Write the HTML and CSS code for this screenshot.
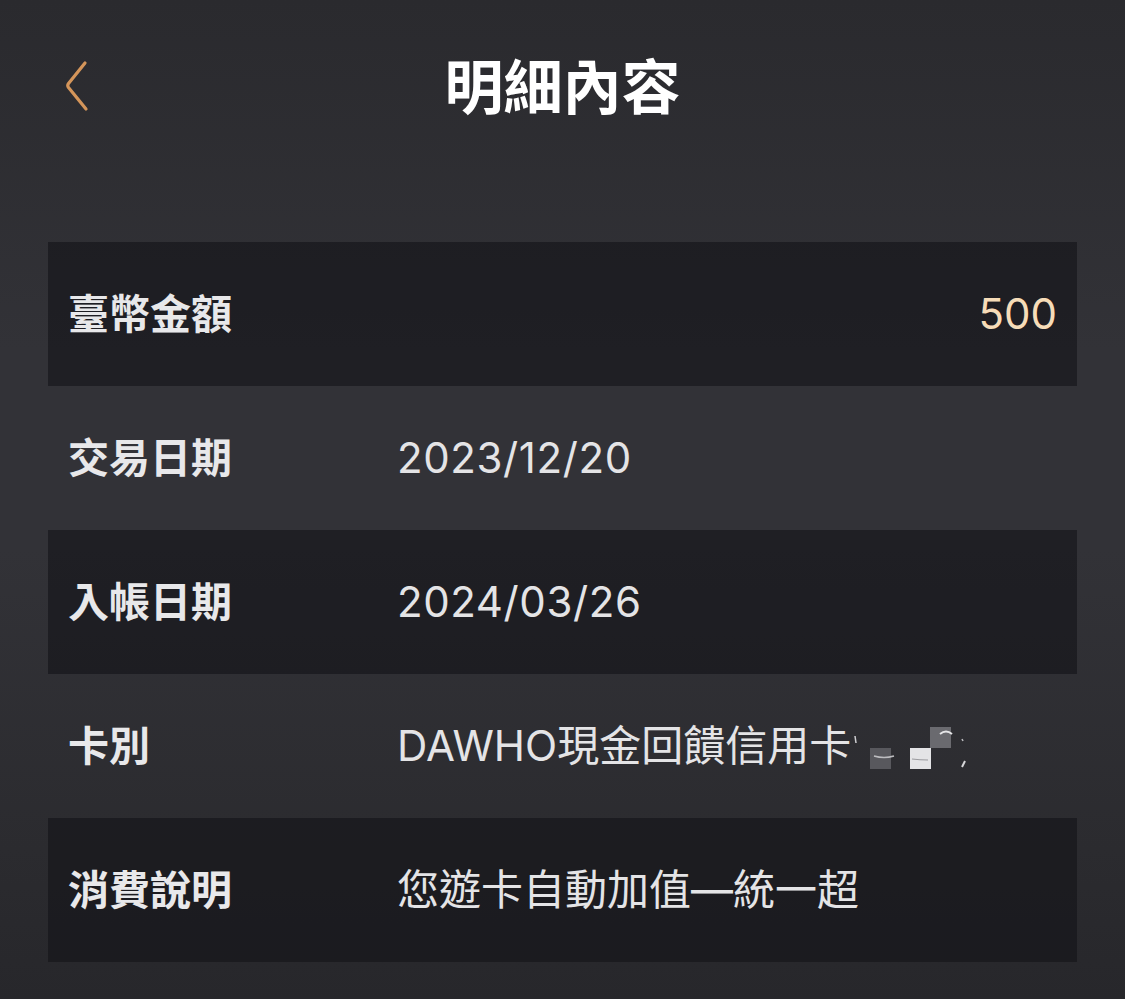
FILE: index.html
```html
<!DOCTYPE html>
<html lang="zh-Hant">
<head>
<meta charset="utf-8">
<title>明細內容</title>
<link rel="stylesheet" href="styles.css">
</head>
<body>
<div class="page">
  <header class="topbar">
    <div class="back">
      <svg width="30" height="52" viewBox="0 0 30 52" aria-hidden="true">
        <path d="M20 3 L3.5 23.5 Q2 25.5 3.5 27.5 L21 49" fill="none" stroke="#d4955a" stroke-width="3.2" stroke-linecap="round" stroke-linejoin="round"/>
      </svg>
    </div>
    <h1 class="title">明細內容</h1>
    <div class="spacer"></div>
  </header>

  <section class="list">
    <div class="row shaded">
      <div class="label">臺幣金額</div>
      <div class="value amount">500</div>
    </div>
    <div class="row">
      <div class="label">交易日期</div>
      <div class="value date">2023/12/20</div>
    </div>
    <div class="row shaded">
      <div class="label">入帳日期</div>
      <div class="value date">2024/03/26</div>
    </div>
    <div class="row">
      <div class="label">卡別</div>
      <div class="value">DAWHO現金回饋信用卡<svg class="mosaic" width="130" height="50" viewBox="0 0 130 50" aria-hidden="true">
          <rect x="19" y="29" width="21" height="21" fill="#58585d"/>
          <rect x="59" y="29" width="21" height="21" fill="#e4e4e6"/>
          <rect x="79" y="8" width="21" height="21" fill="#6a6a6f"/>
          <path d="M4 17 l1 7" stroke="#cfcfd2" stroke-width="1.5"/>
          <path d="M23 37 q10 3 20 0" stroke="#bdbdc0" stroke-width="1.5" fill="none"/>
          <path d="M61 40 q8 1 16 1" stroke="#9a9a9e" stroke-width="1.2" fill="none"/>
          <path d="M89 15 q6 -5 12 0" stroke="#e6e6e8" stroke-width="2" fill="none"/>
          <path d="M111 48 l3 -6" stroke="#d8d8da" stroke-width="2"/>
          <path d="M111 20 l1 2" stroke="#bcbcbf" stroke-width="1.5"/>
        </svg></div>
    </div>
    <div class="row shaded">
      <div class="label">消費說明</div>
      <div class="value">您遊卡自動加值—統一超</div>
    </div>
  </section>
</div>
</body>
</html>
```

FILE: styles.css
```css
html, body {
  margin: 0;
  padding: 0;
}

body {
  width: 1125px;
  height: 999px;
  overflow: hidden;
  font-family: "Liberation Sans", "Noto Sans CJK TC", sans-serif;
  background: linear-gradient(180deg, #2a2a2e 0%, #323237 35%, #323237 55%, #2b2b2f 85%, #27272b 100%);
  color: #e6e6e8;
}

.page {
  width: 1125px;
  height: 999px;
}

.topbar {
  height: 172px;
  display: grid;
  grid-template-columns: 1fr auto 1fr;
  align-items: center;
}

.back {
  padding-left: 65px;
  display: flex;
  align-items: center;
}

.back svg {
  display: block;
}

.title {
  margin: 0 0 6px;
  font-family: "Noto Sans CJK TC", sans-serif;
  font-size: 59px;
  font-weight: 700;
  color: #ffffff;
  line-height: 1;
}

.list {
  margin: 70px 48px 0;
}

.row {
  height: 144px;
  display: flex;
  align-items: center;
  padding: 0 20px;
}

.row.shaded {
  background: rgba(20, 19, 25, 0.62);
}

.label {
  width: 329px;
  flex: none;
  font-family: "Noto Sans CJK TC", sans-serif;
  font-size: 41px;
  font-weight: 700;
  color: #e8e8ea;
  line-height: 1;
  margin-bottom: 6px;
}

.value {
  flex: 1;
  font-family: "Inter", "Noto Sans CJK TC", sans-serif;
  font-size: 42px;
  font-weight: 400;
  color: #e4e4e6;
  line-height: 1;
  white-space: nowrap;
  display: flex;
  align-items: center;
}

.value.date {
  letter-spacing: 0.6px;
}

.value.amount {
  justify-content: flex-end;
  color: #f6dcb8;
}

.mosaic {
  display: block;
  margin-top: -4px;
}
```
